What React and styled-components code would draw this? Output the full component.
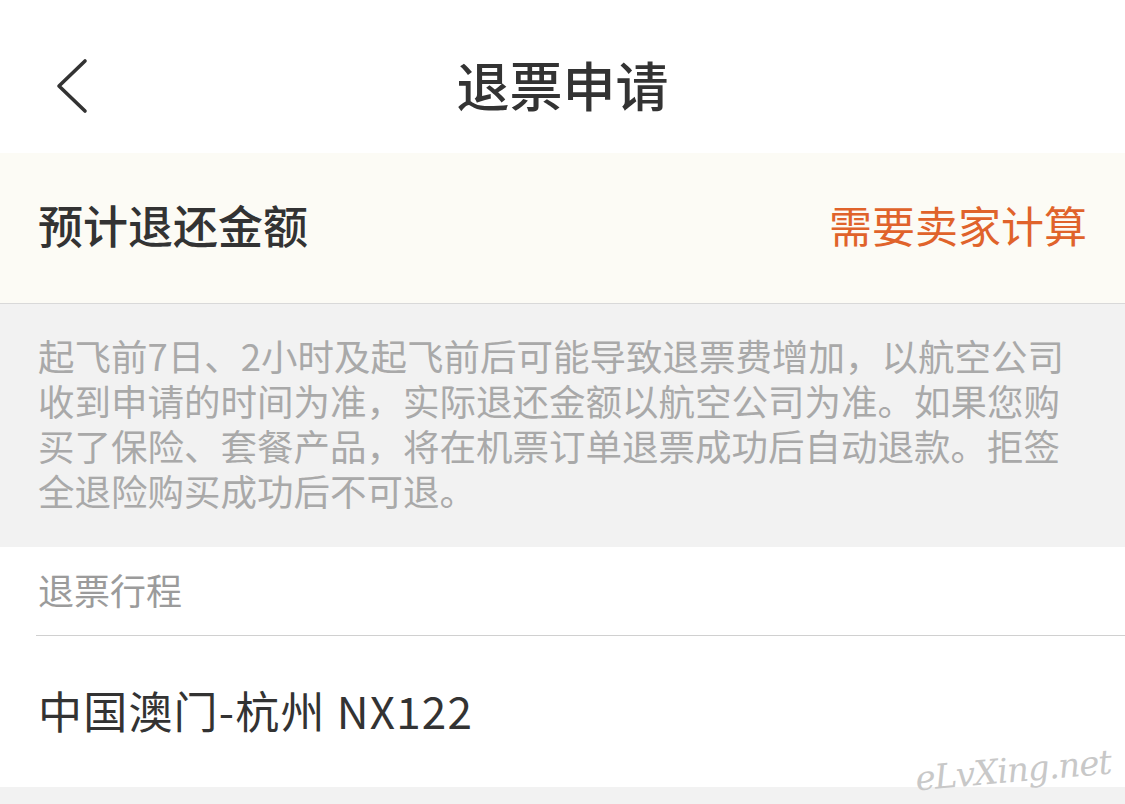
import React from "react";
import styled, { createGlobalStyle } from "styled-components";

const GlobalStyle = createGlobalStyle`
  html, body {
    margin: 0;
    padding: 0;
    background: #ffffff;
  }
  body {
    font-family: "Noto Sans CJK SC", "Noto Sans", sans-serif;
  }
`;

const Page = styled.div`
  position: relative;
  width: 1125px;
  height: 804px;
  overflow: hidden;
  display: flex;
  flex-direction: column;
  background: #f2f2f2;
`;

const Header = styled.div`
  height: 153px;
  box-sizing: border-box;
  padding-top: 18px;
  background: #ffffff;
  display: grid;
  grid-template-columns: 120px 1fr 120px;
  align-items: center;
`;

const BackButton = styled.div`
  display: flex;
  align-items: center;
  padding-left: 54px;
`;

const Title = styled.h1`
  margin: 0;
  text-align: center;
  font-size: 53px;
  font-weight: 500;
  color: #333333;
  padding-bottom: 4px;
`;

const AmountRow = styled.div`
  height: 151px;
  box-sizing: border-box;
  padding: 0 38px 8px;
  background: #fcfbf5;
  border-bottom: 1px solid #d9d9d9;
  display: flex;
  align-items: center;
  justify-content: space-between;
`;

const AmountLabel = styled.span`
  font-size: 45px;
  font-weight: 500;
  color: #333333;
`;

const AmountValue = styled.span`
  font-size: 43px;
  color: #e0632b;
`;

const Notice = styled.div`
  background: #f2f2f2;
  padding: 29px 38px 34px;
  font-size: 36.5px;
  line-height: 45px;
  color: #a9a9a9;
`;

const Section = styled.div`
  background: #ffffff;
`;

const SectionTitle = styled.div`
  height: 89px;
  box-sizing: border-box;
  margin-left: 36px;
  padding: 0 0 5px 2px;
  border-bottom: 1px solid #d0d0d0;
  display: flex;
  align-items: center;
  font-size: 36px;
  color: #9b9b9b;
`;

const RouteRow = styled.div`
  height: 151px;
  box-sizing: border-box;
  padding: 0 38px 3px;
  display: flex;
  align-items: center;
  font-size: 44px;
  letter-spacing: 1.2px;
  color: #333333;
`;

const Footer = styled.div`
  flex: 1;
  background: #f2f2f2;
`;

const Watermark = styled.div`
  position: absolute;
  right: 14px;
  bottom: 14px;
  font-family: "DejaVu Serif", serif;
  font-style: italic;
  font-size: 34px;
  color: #c8c8c8;
  transform: rotate(-5deg);
  letter-spacing: -1px;
`;

function BackIcon() {
  return (
    <svg width="36" height="56" viewBox="0 0 36 56" fill="none">
      <path
        d="M31 3 L5 28 L31 53"
        stroke="#333333"
        strokeWidth="3.6"
        strokeLinecap="round"
        strokeLinejoin="round"
      />
    </svg>
  );
}

export default function App() {
  return (
    <>
      <GlobalStyle />
      <Page>
        <Header>
          <BackButton>
            <BackIcon />
          </BackButton>
          <Title>退票申请</Title>
          <div />
        </Header>
        <AmountRow>
          <AmountLabel>预计退还金额</AmountLabel>
          <AmountValue>需要卖家计算</AmountValue>
        </AmountRow>
        <Notice>
          起飞前7日、2小时及起飞前后可能导致退票费增加，以航空公司收到申请的时间为准，实际退还金额以航空公司为准。如果您购买了保险、套餐产品，将在机票订单退票成功后自动退款。拒签全退险购买成功后不可退。
        </Notice>
        <Section>
          <SectionTitle>退票行程</SectionTitle>
          <RouteRow>中国澳门-杭州 NX122</RouteRow>
        </Section>
        <Footer />
        <Watermark>eLvXing.net</Watermark>
      </Page>
    </>
  );
}
